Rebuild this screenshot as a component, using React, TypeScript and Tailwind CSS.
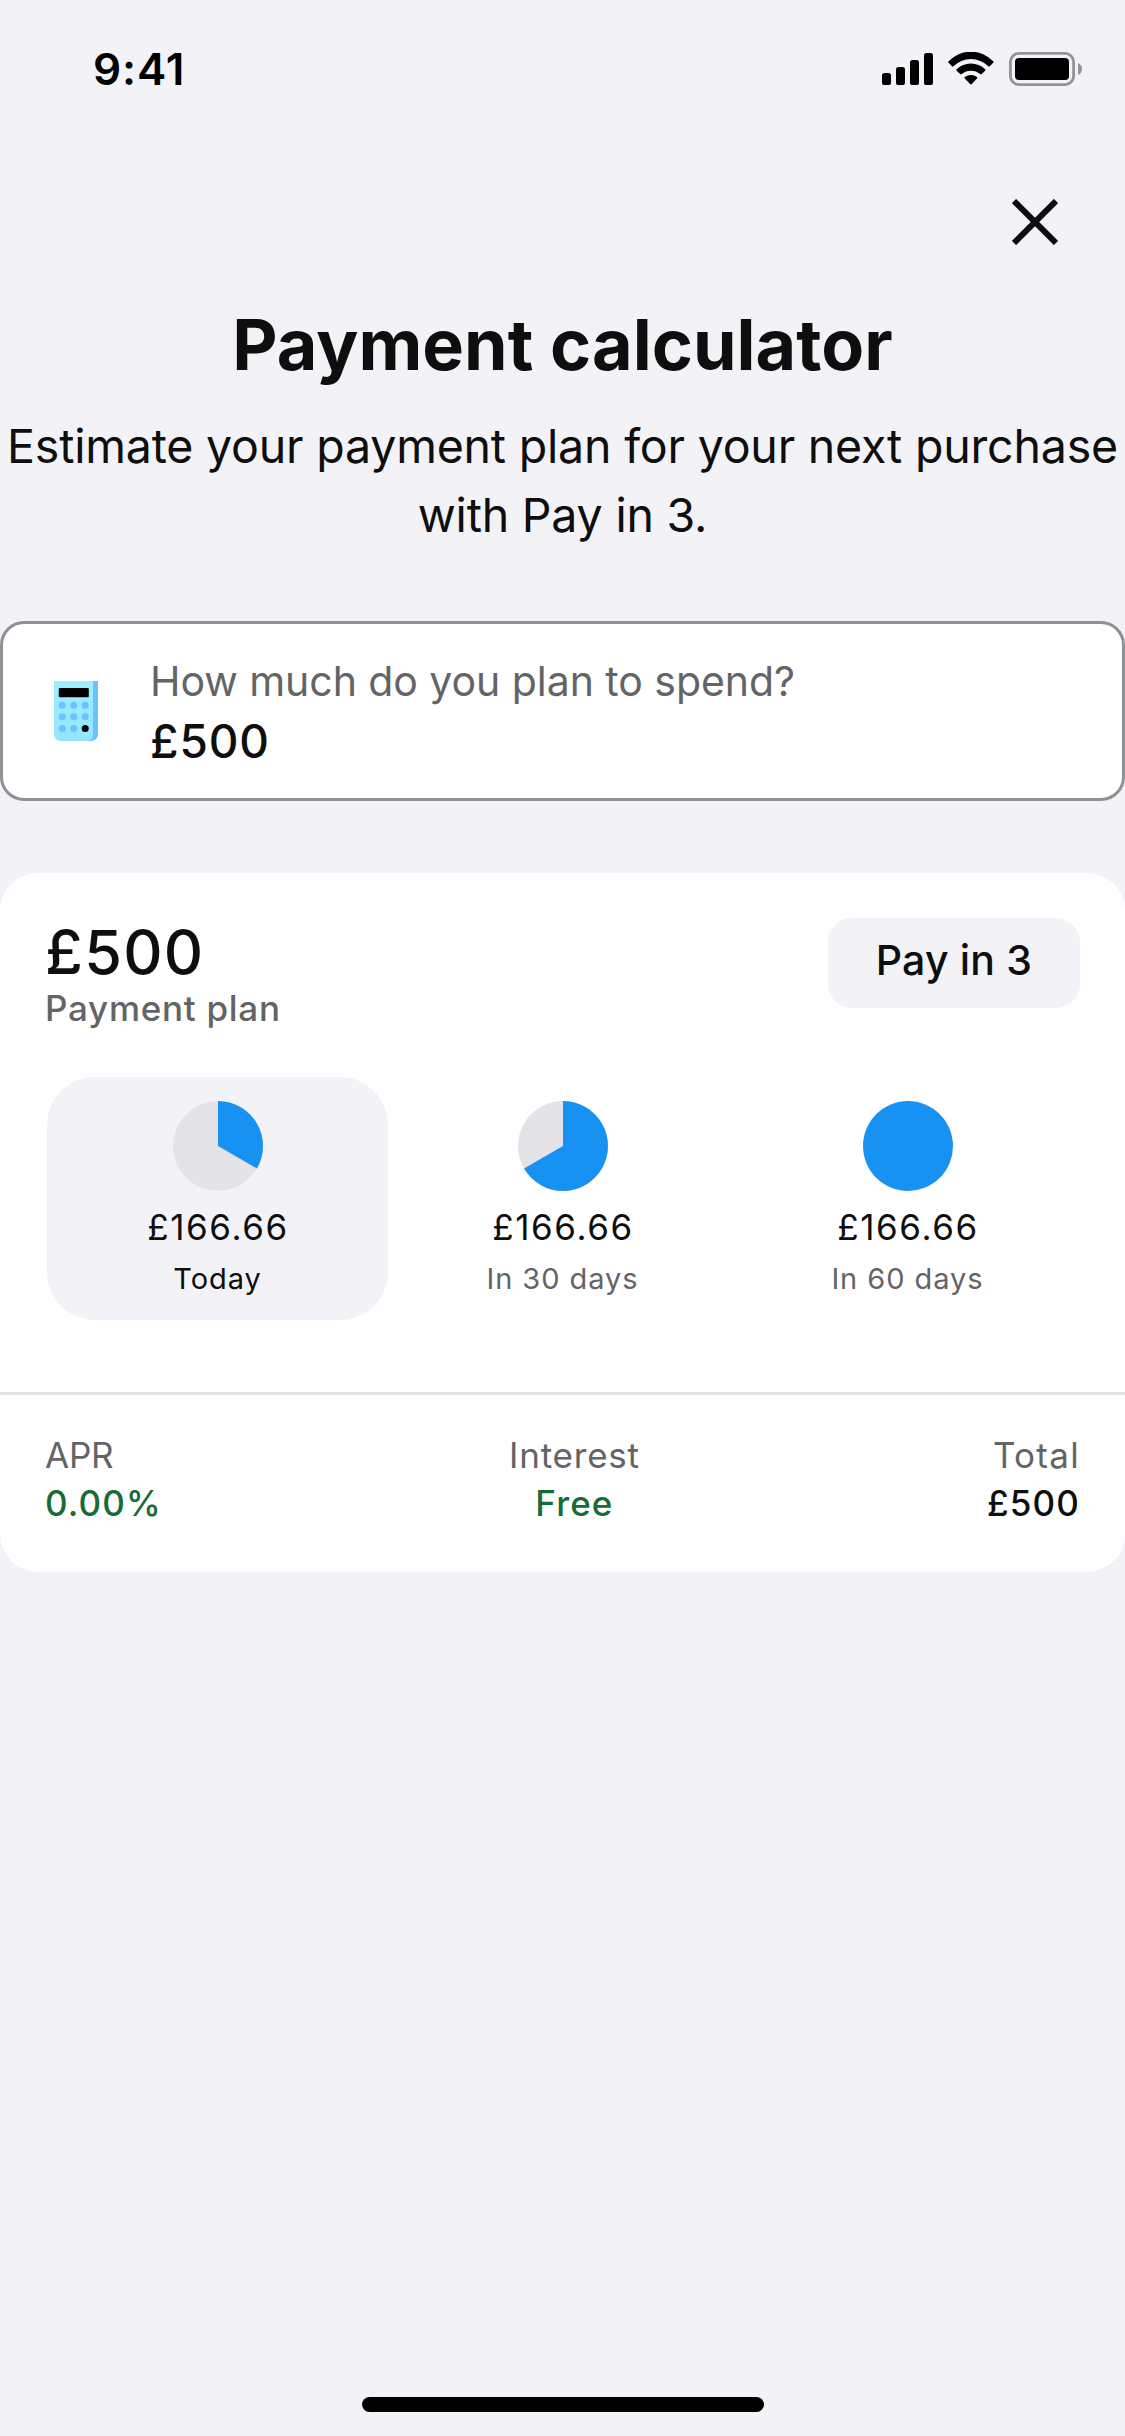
import { useState } from 'react';

type Instalment = {
  amount: string;
  due: string;
  progress: number;
};

const instalments: Instalment[] = [
  { amount: '£166.66', due: 'Today', progress: 1 / 3 },
  { amount: '£166.66', due: 'In 30 days', progress: 2 / 3 },
  { amount: '£166.66', due: 'In 60 days', progress: 1 },
];

function StatusBar() {
  return (
    <div className="flex h-[141px] items-start justify-between pr-[43px] pl-[93px]">
      <span className="mt-[47px] text-[44px] leading-[44px] font-semibold tracking-[0.9px] text-black">
        9:41
      </span>
      <svg className="mt-[52px] h-[34px] w-[200px]" viewBox="0 0 200 34">
        {/* signal */}
        <rect x="0" y="21" width="9" height="12" rx="2.6" />
        <rect x="14" y="15" width="9" height="18" rx="2.6" />
        <rect x="28" y="8" width="9" height="25" rx="2.6" />
        <rect x="42" y="1" width="9" height="32" rx="2.6" />
        {/* wifi */}
        <path d="M66.6 9.3A30.7 30.7 0 0 1 111.2 9.3Q112 10 111.2 10.8L107.8 14.2Q107.2 14.8 106.4 14.2A25 25 0 0 0 71.4 14.2Q70.6 14.8 70 14.2L66.6 10.8Q65.8 10 66.6 9.3Z" />
        <path d="M74.7 17.3A20 20 0 0 1 103.1 17.3Q103.9 18 103.1 18.8L99.7 22.1Q99 22.7 98.2 22.1A14.5 14.5 0 0 0 79.6 22.1Q78.8 22.7 78.1 22.1L74.7 18.8Q73.9 18 74.7 17.3Z" />
        <path d="M82.8 25.1A10 10 0 0 1 95 25.1Q95.8 25.8 95 26.6L89.5 32.2Q88.9 32.8 88.3 32.2L82.8 26.6Q82 25.8 82.8 25.1Z" />
        {/* battery */}
        <rect x="128.4" y="1.4" width="63.2" height="31.2" rx="8.5" fill="none" stroke="#949397" strokeWidth="2.8" />
        <rect x="133" y="6" width="54" height="22" rx="4" />
        <path d="M196 11C198.6 12 200 14.4 200 17C200 19.6 198.6 22 196 23Z" fill="#949397" />
      </svg>
    </div>
  );
}

function CalculatorIcon() {
  return (
    <svg className="h-[60px] w-[44px] shrink-0" viewBox="0 0 44 60">
      <defs>
        <linearGradient id="calcFace" x1="0" y1="0" x2="0" y2="1">
          <stop offset="0" stopColor="#9deffe" />
          <stop offset="1" stopColor="#94e4fe" />
        </linearGradient>
      </defs>
      <path d="M30 0H44V53A7 7 0 0 1 37 60H30Z" fill="#6cc2fe" />
      <path d="M0 0H39V53.5A6.5 6.5 0 0 1 34 60H7A7 7 0 0 1 0 53Z" fill="url(#calcFace)" />
      <rect x="4.8" y="7" width="30" height="9.2" rx="1" fill="#000" />
      {[24.3, 35.8, 47.4].map((cy) =>
        [8.2, 19.7, 31.2].map((cx) => (
          <circle
            key={`${cx}-${cy}`}
            cx={cx}
            cy={cy}
            r="3.5"
            fill={cx === 31.2 && cy === 47.4 ? '#000' : '#6cc2fe'}
          />
        ))
      )}
    </svg>
  );
}

function ProgressPie({ progress }: { progress: number }) {
  const angle = progress * 2 * Math.PI;
  const x = 45 + 45 * Math.sin(angle);
  const y = 45 - 45 * Math.cos(angle);

  return (
    <svg className="h-[90px] w-[90px]" viewBox="0 0 90 90">
      <circle cx="45" cy="45" r="45" fill={progress >= 1 ? '#1892f2' : '#e4e3e8'} />
      {progress < 1 && (
        <path
          d={`M45 45V0A45 45 0 ${progress > 0.5 ? 1 : 0} 1 ${x} ${y}Z`}
          fill="#1892f2"
        />
      )}
    </svg>
  );
}

export default function App() {
  const [selected, setSelected] = useState(0);

  return (
    <div className="flex h-[2436px] w-[1125px] flex-col bg-[#f3f2f7] font-['Inter',sans-serif] text-[#0e0e0f]">
      <StatusBar />

      <div className="flex h-[162px] items-start justify-end pr-[67px]">
        <button className="mt-[58px]" aria-label="Close">
          <svg className="h-[46px] w-[46px]" viewBox="0 0 46 46" fill="none" stroke="#0e0e0f" strokeWidth="6">
            <path d="M2 2L44 44M44 2L2 44" />
          </svg>
        </button>
      </div>

      <h1 className="text-center text-[70px] leading-[84px] font-bold tracking-[0.05px]">Payment calculator</h1>
      <p className="mt-[25px] text-center text-[46.5px] leading-[69px] tracking-[-0.2px] whitespace-nowrap">
        Estimate your payment plan for your next purchase
        <br />
        with Pay in 3.
      </p>

      <div className="mt-[71px] flex h-[180px] items-center gap-[52px] rounded-[24px] border-3 border-[#8f9295] bg-white pl-[51px]">
        <CalculatorIcon />
        <div>
          <div className="text-[41px] leading-[60px] tracking-[-0.05px] text-[#636466]">
            How much do you plan to spend?
          </div>
          <div className="text-[46px] leading-[60px] font-medium tracking-[0.9px]">£500</div>
        </div>
      </div>

      <div className="mt-[72px] rounded-[38px] bg-white">
        <div className="flex items-start justify-between px-[45px] pt-[45px]">
          <div>
            <div className="pt-px text-[61px] leading-[66px] font-medium tracking-[1.3px]">£500</div>
            <div className="-mt-px text-[35px] leading-[48px] font-medium tracking-[0.72px] text-[#636466]">
              Payment plan
            </div>
          </div>
          <div className="h-[90px] w-[252px] rounded-[24px] bg-[#f3f2f7] pt-[12px] text-center text-[41px] leading-[60px] font-medium tracking-[0.2px]">
            Pay in 3
          </div>
        </div>

        <div className="mt-[45px] grid grid-cols-3 gap-1 px-[47px] pb-[72px]">
          {instalments.map((item, index) => (
            <button
              key={item.due}
              onClick={() => setSelected(index)}
              className={`flex h-[243px] flex-col items-center rounded-[48px] pt-[24px] ${
                selected === index ? 'bg-[#f3f2f7]' : 'text-[#636466]'
              }`}
            >
              <ProgressPie progress={item.progress} />
              <span className="mt-[12px] pl-px text-[35px] leading-[48px] tracking-[1.6px] text-[#0e0e0f]">
                {item.amount}
              </span>
              <span className="mt-[7px] text-[29px] leading-[42px] tracking-[0.95px]">{item.due}</span>
            </button>
          ))}
        </div>

        <div className="flex justify-between border-t-3 border-[#e3e4e7] px-[45px] pt-[36px] pb-[45px] text-[35px] leading-[48px] tracking-[1.1px]">
          <div>
            <div className="tracking-[-0.2px] text-[#636466]">APR</div>
            <div className="font-medium text-[#176b35]">0.00%</div>
          </div>
          <div className="text-center">
            <div className="tracking-[0.8px] text-[#636466]">Interest</div>
            <div className="font-medium text-[#176b35]">Free</div>
          </div>
          <div className="text-right">
            <div className="tracking-[1.3px] text-[#636466]">Total</div>
            <div className="font-medium">£500</div>
          </div>
        </div>
      </div>

      {/* home indicator */}
      <div className="mx-auto mt-auto mb-[24px] h-[15px] w-[402px] rounded-full bg-black" />
    </div>
  );
}
